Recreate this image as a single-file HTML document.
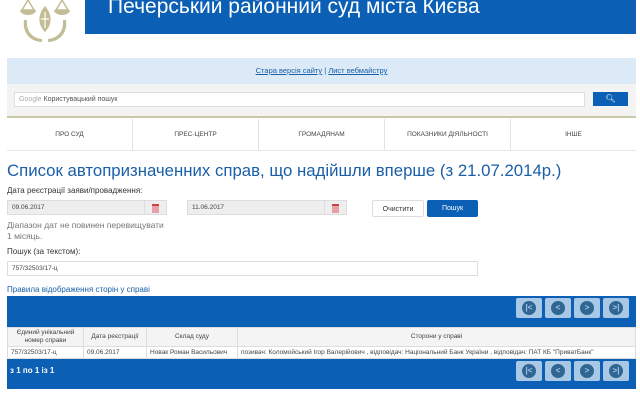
<!DOCTYPE html>
<html><head><meta charset="utf-8"><style>
*{margin:0;padding:0;box-sizing:border-box}
body{width:640px;height:405px;background:#fff;font-family:"Liberation Sans",sans-serif;position:relative;overflow:hidden;color:#333}
.a{position:absolute}
.hdr{left:85px;top:0;width:551px;height:34px;background:#0b5fb4}
.hdr span{position:absolute;left:23px;top:-5px;color:#fff;font-size:21px;white-space:nowrap}
.band{left:7px;top:58px;width:629px;height:26px;background:#dbeaf6;text-align:center;font-size:7.5px;line-height:26px;color:#1a5fa8}
.band u{color:#1a5fa8}
.sa{left:7px;top:84px;width:629px;height:34px;background:#f3f3f3;border-bottom:2px solid #c8c8a8}
.si{left:14px;top:92px;width:571px;height:15px;background:#fff;border:1px solid #ddd;font-size:7px;line-height:13px;padding-left:4px;color:#555}
.sb{left:593px;top:92px;width:35px;height:14px;background:#0b5fb4;color:#fff;font-size:8px;text-align:center;line-height:14px}
.nav{left:7px;top:119px;width:629px;height:32px;display:flex;border-bottom:1px solid #e8e8e8}
.nav div{flex:1;border-right:1px solid #e3e3e3;font-size:6.5px;text-align:center;line-height:32px;color:#444}
.nav div:last-child{border-right:none}
h1{position:absolute;left:7px;top:161px;font-size:16.8px;font-weight:normal;color:#1a5fa8;white-space:nowrap}
.t{font-size:8px;color:#333;white-space:nowrap}
.inp{background:#eee;border:1px solid #ddd;height:15px;font-size:6.5px;line-height:13px;padding-left:4px;color:#444}
.cal{position:absolute;right:0;top:0;width:22px;height:13px;border-left:1px solid #ddd}
.cal:after{content:"";position:absolute;left:7px;top:3px;width:7px;height:7px;background:#e8a0a8;border-top:2px solid #c44}
.btn{font-size:7px;text-align:center;line-height:17px;height:17px;border-radius:2px}
.blue{background:#0b5fb4}
.pg{position:absolute;width:26px;height:20px;background:#a9c8e6;border-radius:2px}
.pg b{position:absolute;left:6px;top:3px;width:14px;height:14px;border-radius:50%;background:#2f6692;color:#a9c8e6;font-size:8px;line-height:14px;text-align:center;font-weight:bold}
table{position:absolute;left:7px;top:327px;width:629px;border-collapse:collapse;font-size:6.5px;color:#444}
td{border:1px solid #ddd;padding:1px 3px}
tr.h td{background:#f4f4f4;text-align:center;height:19px;line-height:8px}
tr.d td{height:12px;background:#fff}
</style></head><body>
<svg class="a" style="left:18px;top:0" width="54" height="48" viewBox="0 0 54 48">
<g fill="#c2bd95">
<path d="M4 10 L10 0 L16 10 Z" fill="none" stroke="#c2bd95" stroke-width="1.5"/>
<path d="M2 10 h16 a8 5 0 0 1 -16 0z"/>
<path d="M38 10 L44 0 L50 10 Z" fill="none" stroke="#c2bd95" stroke-width="1.5"/>
<path d="M36 10 h16 a8 5 0 0 1 -16 0z"/>
<path d="M27 6 C20 14 19 24 27 32 C35 24 34 14 27 6Z"/>
<path d="M6 20 C4 34 14 42 24 42 L24 39 C14 38 8 31 9 20Z"/>
<path d="M48 20 C50 34 40 42 30 42 L30 39 C40 38 46 31 45 20Z"/>
</g><path d="M27 12 V28 M23 19 H31" stroke="#fff" stroke-width="1.2"/></svg>
<div class="a hdr"><span>Печерський районний суд міста Києва</span></div>
<div class="a band"><u>Стара версія сайту</u> | <u>Лист вебмайстру</u></div>
<div class="a sa"></div>
<div class="a si"><span style="color:#aaa">Google</span> Користувацький пошук</div>
<div class="a sb">&#x1F50D;&#xFE0E;</div>
<div class="a nav"><div>ПРО СУД</div><div>ПРЕС-ЦЕНТР</div><div>ГРОМАДЯНАМ</div><div>ПОКАЗНИКИ ДІЯЛЬНОСТІ</div><div>ІНШЕ</div></div>
<h1>Список автопризначенних справ, що надійшли вперше (з 21.07.2014р.)</h1>
<div class="a t" style="left:7px;top:186px">Дата реєстрації заяви/провадження:</div>
<div class="a inp" style="left:7px;top:200px;width:160px">09.06.2017<div class="cal"></div></div>
<div class="a inp" style="left:187px;top:200px;width:160px">11.06.2017<div class="cal"></div></div>
<div class="a btn" style="left:372px;top:200px;width:52px;border:1px solid #ddd;color:#333;background:#fff">Очистити</div>
<div class="a btn blue" style="left:427px;top:200px;width:51px;color:#fff">Пошук</div>
<div class="a t" style="left:7px;top:220px;color:#777;font-size:8.5px;line-height:11px">Діапазон дат не повинен перевищувати<br>1 місяць.</div>
<div class="a t" style="left:7px;top:247px">Пошук (за текстом):</div>
<div class="a inp" style="left:7px;top:261px;width:471px;background:#fff">757/32503/17-ц</div>
<div class="a t" style="left:7px;top:285px;color:#1a5fa8">Правила відображення сторін у справі</div>
<div class="a blue" style="left:7px;top:296px;width:629px;height:31px"></div>
<div class="pg" style="left:516px;top:298px"><b>|&lt;</b></div><div class="pg" style="left:545px;top:298px"><b>&lt;</b></div><div class="pg" style="left:574px;top:298px"><b>&gt;</b></div><div class="pg" style="left:603px;top:298px"><b>&gt;|</b></div>
<table><tr class="h"><td style="width:76px">Єдиний унікальний<br>номер справи</td><td style="width:63px">Дата реєстрації</td><td style="width:91px">Склад суду</td><td>Сторони у справі</td></tr>
<tr class="d"><td>757/32503/17-ц</td><td>09.06.2017</td><td>Новак Роман Васильович</td><td>позивач: Коломойський Ігор Валерійович , відповідач: Національний Банк України , відповідач: ПАТ КБ "ПриватБанк"</td></tr></table>
<div class="a blue" style="left:7px;top:359px;width:629px;height:30px"></div>
<div class="a t" style="left:10px;top:366px;color:#fff;font-size:8px;font-weight:bold">з 1 по 1 із 1</div>
<div class="pg" style="left:516px;top:361px"><b>|&lt;</b></div><div class="pg" style="left:545px;top:361px"><b>&lt;</b></div><div class="pg" style="left:574px;top:361px"><b>&gt;</b></div><div class="pg" style="left:603px;top:361px"><b>&gt;|</b></div>
</body></html>
